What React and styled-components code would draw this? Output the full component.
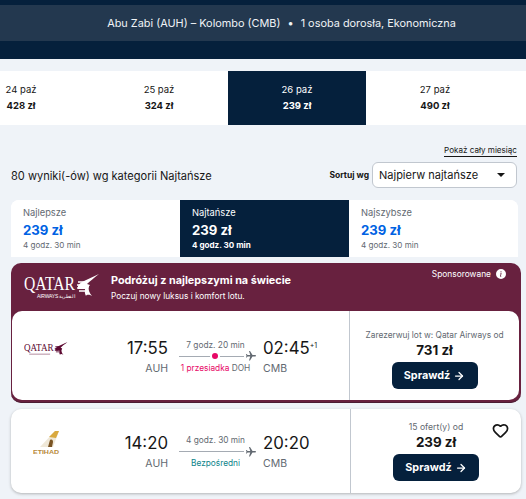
import React from "react";
import styled, { createGlobalStyle } from "styled-components";
import { Heart, ArrowRight } from "lucide-react";
import { MdFlight } from "react-icons/md";
import { BsInfoCircleFill } from "react-icons/bs";

const navy = "#05203c";
const burgundy = "#68213f";

const GlobalStyle = createGlobalStyle`
  html, body {
    margin: 0;
    padding: 0;
    background: #eff3f8;
    font-family: "Inter", "Liberation Sans", sans-serif;
    color: #161616;
    overflow: hidden;
  }
  * { box-sizing: border-box; }
`;

const Page = styled.div`
  width: 526px;
  height: 499px;
  overflow: hidden;
`;

// header
const Header = styled.header`
  background: ${navy};
  padding: 5px 0 18px;
`;

const SummaryBand = styled.div`
  height: 36px;
  background: #23384f;
  color: #f0f3f6;
  font-size: 10.9px;
  display: flex;
  align-items: center;
  justify-content: center;
  gap: 7px;
  padding-left: 37px;
`;

// date strip
const DateStrip = styled.div`
  margin-top: 12px;
  height: 54px;
  background: #fff;
  display: flex;
  overflow: hidden;
`;

const DateTrack = styled.div`
  display: flex;
  margin-left: -48px;
`;

const DateCell = styled.div`
  flex: 0 0 138px;
  display: flex;
  flex-direction: column;
  align-items: center;
  justify-content: center;
  gap: 5px;
  padding-bottom: 2px;
  font-size: 9.5px;
  background: ${(p) => (p.$active ? navy : "#fff")};
  color: ${(p) => (p.$active ? "#fff" : "#161616")};
  b {
    font-size: 9.5px;
    font-weight: 700;
  }
`;

// results
const Main = styled.main`
  padding: 0 5px 0 11px;
`;

const MonthLink = styled.div`
  margin-top: 12px;
  padding-right: 4px;
  height: 25px;
  text-align: right;
  a {
    font-size: 8.1px;
    line-height: 11px;
    display: inline-block;
    color: #161616;
    border-bottom: 1px solid #161616;
  }
`;

const Toolbar = styled.div`
  display: flex;
  align-items: center;
  justify-content: space-between;
  height: 26px;
  margin-right: 4px;
`;

const ResultCount = styled.div`
  font-size: 11.05px;
  color: #161616;
  padding-top: 1px;
`;

const SortGroup = styled.div`
  display: flex;
  align-items: center;
  gap: 3px;
  font-size: 8.5px;
  font-weight: 700;
`;

const SortSelect = styled.div`
  width: 145px;
  height: 26px;
  background: #fff;
  border: 1px solid #c1c7cf;
  border-radius: 6px;
  display: flex;
  align-items: center;
  justify-content: space-between;
  padding: 0 11px 0 6px;
  font-size: 11px;
  font-weight: 400;
`;

const Caret = styled.span`
  width: 0;
  height: 0;
  border-left: 4px solid transparent;
  border-right: 4px solid transparent;
  border-top: 4px solid #161616;
`;

const Tabs = styled.div`
  margin: 12px 3px 0 0;
  height: 57px;
  display: grid;
  grid-template-columns: repeat(3, 1fr);
  background: #fff;
  border-radius: 8px 8px 0 0;
  overflow: hidden;
`;

const Tab = styled.div`
  padding: 7px 12px;
  background: ${(p) => (p.$active ? navy : "#fff")};
  color: ${(p) => (p.$active ? "#fff" : "#626971")};
  h4 {
    margin: 0;
    font-size: 9.3px;
    line-height: 12px;
    font-weight: 400;
  }
  strong {
    display: block;
    margin-top: 2px;
    font-size: 13.2px;
    line-height: 18px;
    font-weight: 700;
    color: ${(p) => (p.$active ? "#fff" : "#0062e3")};
  }
  span {
    display: block;
    margin-top: 1px;
    font-size: 8.1px;
    line-height: 11px;
    font-weight: ${(p) => (p.$active ? 700 : 400)};
  }
`;

// sponsored card
const AdCard = styled.section`
  margin-top: 6px;
  height: 140px;
  background: ${burgundy};
  border-radius: 10px;
  padding: 0 2px 2px 1px;
  border-bottom: 1px solid #4b1c33;
`;

const AdHeader = styled.div`
  height: 48px;
  display: flex;
  color: #fff;
  padding-left: 12px;
  position: relative;
`;

const AdLogo = styled.div`
  padding-top: 11px;
`;

const AdCopy = styled.div`
  margin-left: 12px;
  padding-top: 11px;
  h3 {
    margin: 0;
    font-size: 10.8px;
    line-height: 13px;
    font-weight: 700;
  }
  p {
    margin: 4px 0 0;
    font-size: 8.3px;
    line-height: 11px;
  }
`;

const Sponsored = styled.div`
  position: absolute;
  right: 13px;
  top: 6px;
  display: flex;
  align-items: center;
  gap: 5px;
  font-size: 8.4px;
  svg { width: 10px; height: 10px; }
`;

const FlightRow = styled.div`
  height: ${(p) => p.$height}px;
  background: #fff;
  border-radius: 10px;
  display: flex;
  box-shadow: ${(p) => (p.$raised ? "0 1px 3px rgba(37,32,31,.3)" : "none")};
  margin-top: ${(p) => (p.$raised ? 6 : 0)}px;
`;

const LegPanel = styled.div`
  flex: 0 0 ${(p) => p.$width}px;
  display: flex;
  align-items: center;
  border-right: 1px solid #c1c7cf;
`;

const LogoSlot = styled.div`
  flex: 0 0 100px;
  display: flex;
  padding-left: ${(p) => p.$inset}px;
  padding-bottom: ${(p) => p.$lift}px;
`;

const TimeBlock = styled.div`
  flex: 0 0 ${(p) => p.$width}px;
  text-align: ${(p) => p.$align};
  padding-top: 1px;
  font-size: 16.8px;
  line-height: 22px;
  color: #161616;
  white-space: nowrap;
  sup {
    font-size: 7px;
    line-height: 0;
    vertical-align: 6px;
  }
  small {
    display: block;
    margin-top: 3px;
    font-size: 10.5px;
    line-height: 14px;
    color: #626971;
  }
`;

const Route = styled.div`
  flex: 0 0 95px;
  display: flex;
  flex-direction: column;
  align-items: center;
  padding: 0 11px;
  margin-top: 1px;
  font-size: 8.3px;
  color: #626971;
  white-space: nowrap;
`;

const RouteLine = styled.div`
  align-self: stretch;
  height: 13px;
  margin-right: -5px;
  display: flex;
  align-items: center;
  position: relative;
  &::before {
    content: "";
    flex: 1;
    height: 1px;
    background: #a5abb3;
  }
  svg {
    width: 12px;
    height: 12px;
    margin-left: 1px;
    color: #626971;
    transform: rotate(90deg);
  }
`;

const StopDot = styled.span`
  position: absolute;
  left: 33px;
  top: 3.5px;
  width: 6px;
  height: 6px;
  border-radius: 50%;
  background: #e70866;
  box-shadow: 0 0 0 2px #fff;
`;

const StopText = styled.div`
  color: ${(p) => p.$color};
  span { color: #626971; }
`;

const PricePanel = styled.div`
  flex: 1;
  display: flex;
  flex-direction: column;
  align-items: center;
  position: relative;
  padding-top: ${(p) => p.$top}px;
`;

const OfferText = styled.div`
  font-size: ${(p) => p.$size}px;
  line-height: 12px;
  color: #626971;
  white-space: nowrap;
`;

const Price = styled.div`
  font-size: 13.4px;
  line-height: 18px;
  font-weight: 700;
  color: #161616;
`;

const CheckButton = styled.button`
  margin-top: 3px;
  width: 86px;
  height: 27px;
  border: 0;
  border-radius: 6px;
  background: ${navy};
  color: #fff;
  font-family: inherit;
  font-size: 10.8px;
  font-weight: 700;
  display: flex;
  align-items: center;
  justify-content: center;
  gap: 3px;
  svg { width: 12px; height: 12px; }
`;

const FavButton = styled.span`
  position: absolute;
  right: 12px;
  top: 13px;
  line-height: 0;
  color: #161616;
`;

const QatarLogo = ({ color, scale, arabic }) => (
  <svg width={75 * scale} height={26 * scale} viewBox="0 0 75 26">
    <text x="0" y="16" fontFamily="Liberation Serif" fontSize="18.5" textLength="51" lengthAdjust="spacingAndGlyphs" fill={color}>
      QATAR
    </text>
    {arabic && (
      <text x="13" y="23.5" fontFamily="Liberation Sans" fontSize="5" textLength="38" fill={color}>
        AIRWAYS القطرية
      </text>
    )}
    {!arabic && <rect x="9" y="20" width="36" height="2" fill={color} opacity=".4" />}
    <path d="M75 0 60 7c-3 1-5 3-6 5l0 3 8 0c2 0 2-2 4-4l-3-1c3-3 7-6 12-10Z" fill={color} />
    <path d="M54 8h6M53 11h6M53 14h6M55 17h6" stroke={color} strokeWidth="1.4" />
    <path d="M62 11c-1 4-2 7 0 11 1-2 4-1 6 0-3-3-4-7-3-10Z" fill={color} />
  </svg>
);

const EtihadLogo = () => (
  <svg width="28" height="24" viewBox="0 0 28 24">
    <path d="M7 17 22 1h4l-6 16Z" fill="#efe8d8" />
    <path d="M16 7 22 1h4l-3 7Z" fill="#d9a93f" />
    <path d="M15 17l2-7c2-1 3 0 3 2l-1 5Z" fill="#7a5423" />
    <text x="0" y="23.5" fontFamily="Liberation Sans" fontSize="5.4" textLength="26" lengthAdjust="spacingAndGlyphs" fontWeight="700" fill="#b88a3a">
      ETIHAD
    </text>
  </svg>
);

const dates = [
  { day: "24 paź", price: "428 zł" },
  { day: "25 paź", price: "324 zł" },
  { day: "26 paź", price: "239 zł", active: true },
  { day: "27 paź", price: "490 zł" },
  { day: "", price: "" },
];

const tabs = [
  { name: "Najlepsze", price: "239 zł", time: "4 godz. 30 min" },
  { name: "Najtańsze", price: "239 zł", time: "4 godz. 30 min", active: true },
  { name: "Najszybsze", price: "239 zł", time: "4 godz. 30 min" },
];

const App = () => {
  return (
    <Page>
      <GlobalStyle />
      <Header>
        <SummaryBand>
          <span>Abu Zabi (AUH) – Kolombo (CMB)</span>
          <span>•</span>
          <span>1 osoba dorosła, Ekonomiczna</span>
        </SummaryBand>
      </Header>

      <DateStrip>
        <DateTrack>
          {dates.map((d, index) => (
            <DateCell key={index} $active={d.active}>
              <span>{d.day}</span>
              <b>{d.price}</b>
            </DateCell>
          ))}
        </DateTrack>
      </DateStrip>

      <Main>
        <MonthLink>
          <a>Pokaż cały miesiąc</a>
        </MonthLink>
        <Toolbar>
          <ResultCount>80 wyniki(-ów) wg kategorii Najtańsze</ResultCount>
          <SortGroup>
            Sortuj wg
            <SortSelect>
              Najpierw najtańsze
              <Caret />
            </SortSelect>
          </SortGroup>
        </Toolbar>

        <Tabs>
          {tabs.map((t) => (
            <Tab key={t.name} $active={t.active}>
              <h4>{t.name}</h4>
              <strong>{t.price}</strong>
              <span>{t.time}</span>
            </Tab>
          ))}
        </Tabs>

        {/* sponsored */}
        <AdCard>
          <AdHeader>
            <AdLogo>
              <QatarLogo color="#fff" scale={1} arabic />
            </AdLogo>
            <AdCopy>
              <h3>Podróżuj z najlepszymi na świecie</h3>
              <p>Poczuj nowy luksus i komfort lotu.</p>
            </AdCopy>
            <Sponsored>
              Sponsorowane
              <BsInfoCircleFill />
            </Sponsored>
          </AdHeader>
          <FlightRow $height={89}>
            <LegPanel $width={338}>
              <LogoSlot $inset={12} $lift={12}>
                <QatarLogo color="#5c0931" scale={0.58} />
              </LogoSlot>
              <TimeBlock $width={56} $align="right">
                17:55
                <small>AUH</small>
              </TimeBlock>
              <Route>
                <span>7 godz. 20 min</span>
                <RouteLine>
                  <MdFlight />
                  <StopDot />
                </RouteLine>
                <StopText $color="#e70866">
                  1 przesiadka <span>DOH</span>
                </StopText>
              </Route>
              <TimeBlock $width={60} $align="left">
                02:45<sup>+1</sup>
                <small>CMB</small>
              </TimeBlock>
            </LegPanel>
            <PricePanel $top={18}>
              <OfferText $size={8.35}>Zarezerwuj lot w: Qatar Airways od</OfferText>
              <Price>731 zł</Price>
              <CheckButton>
                Sprawdź <ArrowRight strokeWidth={2.5} />
              </CheckButton>
            </PricePanel>
          </FlightRow>
        </AdCard>

        {/* direct flight */}
        <FlightRow $height={84} $raised>
          <LegPanel $width={340}>
            <LogoSlot $inset={22} $lift={18}>
              <EtihadLogo />
            </LogoSlot>
            <TimeBlock $width={57} $align="right">
              14:20
              <small>AUH</small>
            </TimeBlock>
            <Route>
              <span>4 godz. 30 min</span>
              <RouteLine>
                <MdFlight />
              </RouteLine>
              <StopText $color="#0c838a">Bezpośredni</StopText>
            </Route>
            <TimeBlock $width={60} $align="left">
              20:20
              <small>CMB</small>
            </TimeBlock>
          </LegPanel>
          <PricePanel $top={12}>
            <OfferText $size={8.6}>15 ofert(y) od</OfferText>
            <Price>239 zł</Price>
            <CheckButton>
              Sprawdź <ArrowRight strokeWidth={2.5} />
            </CheckButton>
            <FavButton>
              <Heart size={17} strokeWidth={2.4} />
            </FavButton>
          </PricePanel>
        </FlightRow>
      </Main>
    </Page>
  );
};

export default App;
